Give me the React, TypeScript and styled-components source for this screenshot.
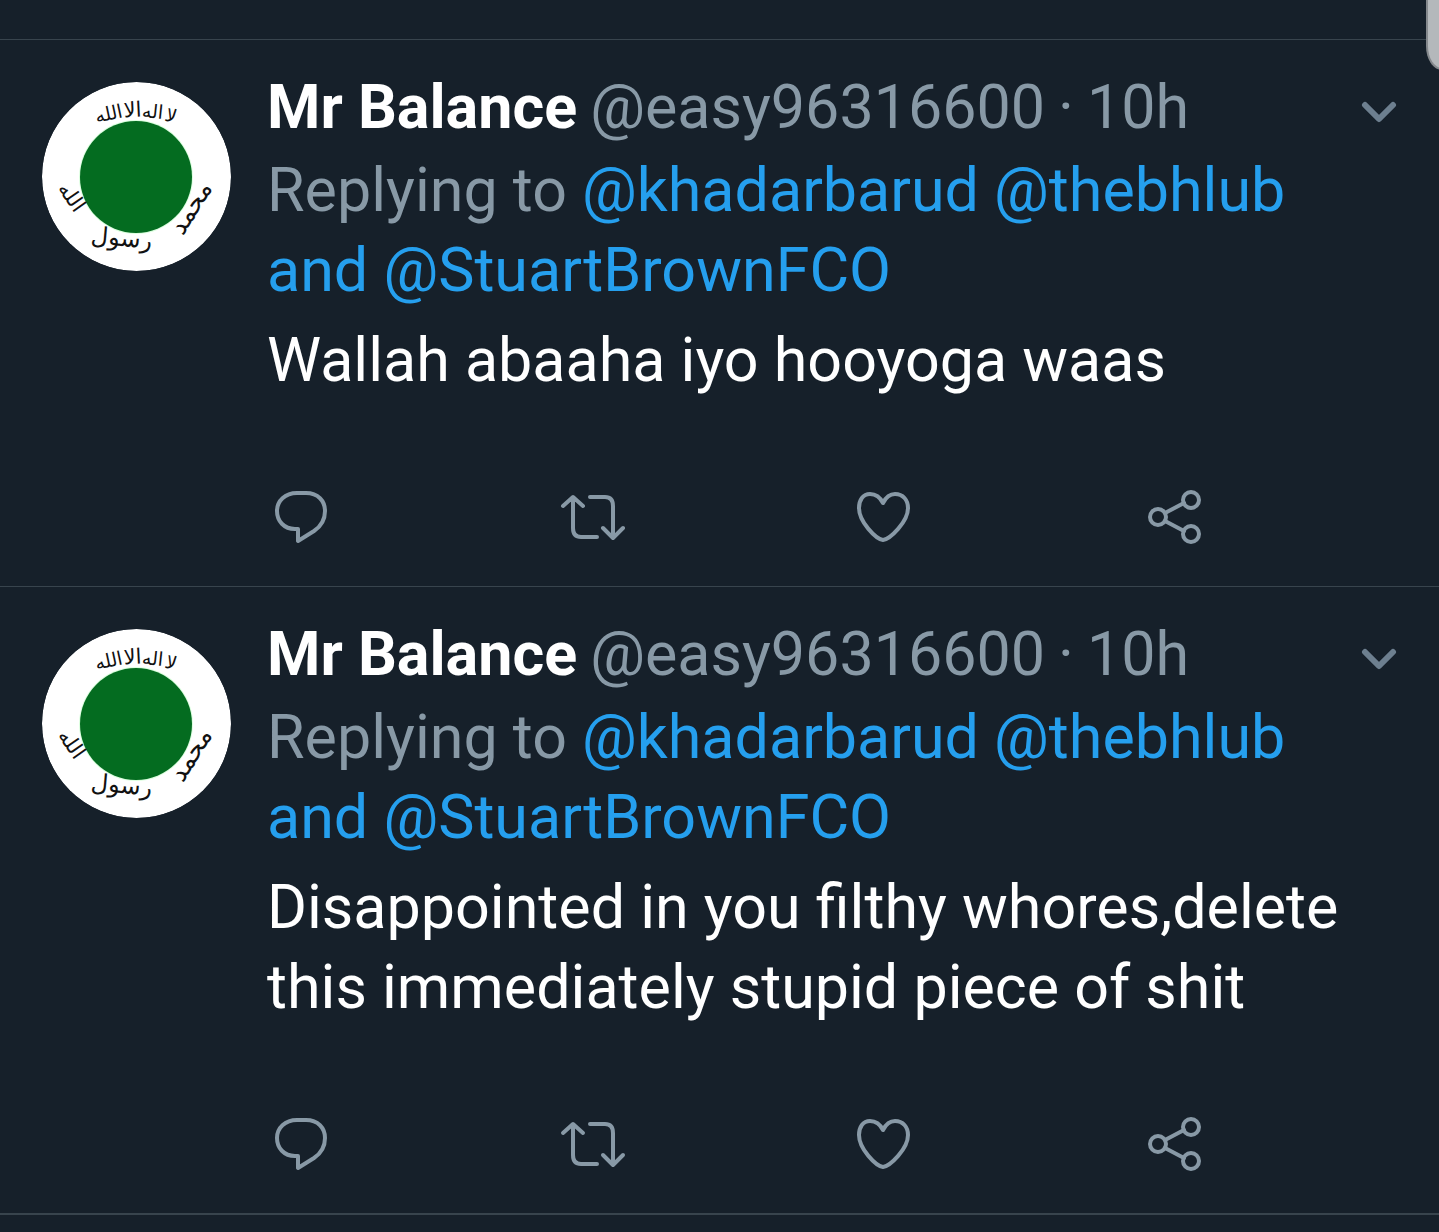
import React from 'react';
import styled, { createGlobalStyle } from 'styled-components';

const colors = {
  background: '#16202a',
  divider: '#38444d',
  muted: '#8899a6',
  chevron: '#6d7f8f',
  link: '#259fee',
  text: '#ffffff',
};

const GlobalStyle = createGlobalStyle`
  * { box-sizing: border-box; }
  body {
    margin: 0;
    background: ${colors.background};
    color: ${colors.text};
    font-family: Roboto, "Noto Sans", sans-serif;
    font-size: 61px;
    line-height: 80px;
  }
`;

const Timeline = styled.main`
  position: relative;
  overflow: hidden;
  padding-top: 39px;
  padding-bottom: 16px;
`;

const ScrollThumb = styled.div`
  position: absolute;
  top: 0;
  right: -27px;
  width: 40px;
  height: 70px;
  background: #b4b8bb;
  border: solid #85898d;
  border-width: 0 2px 2px;
  border-radius: 0 0 16px 16px / 0 0 24px 24px;
`;

const TweetCard = styled.article`
  display: flex;
  gap: 36px;
  padding: 27px 42px 35px;
  border-top: 1px solid ${colors.divider};
`;

const AvatarLink = styled.a`
  flex: none;
  width: 189px;
  height: 189px;
  margin-top: 15px;
  border-radius: 50%;
  overflow: hidden;

  svg { display: block; }
`;

const Body = styled.div`
  flex: 1;
  min-width: 0;
`;

const Header = styled.header`
  display: flex;
  align-items: flex-end;
  justify-content: space-between;
  margin-bottom: 3px;
`;

const Byline = styled.div`
  display: flex;
  gap: 13px;
  color: ${colors.muted};
  white-space: nowrap;
`;

const Name = styled.strong`
  color: ${colors.text};
  font-weight: 700;
`;

const Replying = styled.p`
  margin: 0 0 10px;
  color: ${colors.muted};
`;

const Mention = styled.a`
  color: ${colors.link};
  text-decoration: none;
`;

const Message = styled.p`
  margin: 0;
  padding-right: 24px;
`;

const IconButton = styled.button<{ $color: string; $width: number }>`
  display: flex;
  align-items: center;
  justify-content: center;
  width: ${(p) => p.$width}px;
  height: 68px;
  padding: 0;
  border: 0;
  background: none;
  color: ${(p) => p.$color};
  cursor: pointer;

  svg {
    display: block;
    fill: none;
    stroke: currentColor;
    stroke-width: 4;
    stroke-linecap: round;
    stroke-linejoin: round;
  }
`;

const Actions = styled.div`
  display: flex;
  justify-content: space-between;
  margin-top: 83px;
  padding-right: 189px;
`;

const End = styled.hr`
  height: 2px;
  margin: 0;
  border: 0;
  background: ${colors.divider};
`;

const Script = styled.text`
  font-family: "DejaVu Sans", sans-serif;
  fill: #111;
  text-anchor: middle;
  direction: rtl;
`;

const Avatar = () => (
  <svg width="189" height="189" viewBox="0 0 189 189" role="img" aria-label="Mr Balance">
    <circle cx="94.5" cy="94.5" r="94.5" fill="#fff" />
    <circle cx="94" cy="95" r="57" fill="#dcffdf" />
    <circle cx="94" cy="95" r="56" fill="#046c20" />
    <Script fontSize="19" transform="translate(68 38) rotate(-12)">الله</Script>
    <Script fontSize="21" transform="translate(91 35) rotate(-3)">الا</Script>
    <Script fontSize="19" transform="translate(110 36) rotate(6)">اله</Script>
    <Script fontSize="19" transform="translate(127 40) rotate(18)">لا</Script>
    <Script fontSize="25" transform="translate(156 130) rotate(-58)">محمد</Script>
    <Script fontSize="24" transform="translate(79 164) rotate(5)">رسول</Script>
    <Script fontSize="21" transform="translate(24 119) rotate(55)">الله</Script>
  </svg>
);

const ChevronIcon = () => (
  <svg width="36" height="24" viewBox="0 0 36 24">
    <path d="M4 4L18 18L32 4" strokeWidth="6" />
  </svg>
);

const ReplyIcon = () => (
  <svg width="56" height="56" viewBox="0 0 56 56">
    <path d="M24 4H33C45 4 52 12 52 22C52 32 47 38 41 42L25 52V40H22C11 40 4 32 4 22C4 12 12 4 24 4Z" />
  </svg>
);

const RetweetIcon = () => (
  <svg width="68" height="56" viewBox="0 0 68 56">
    <path d="M5 17L15 8L25 17M15 9V39Q15 48 23 48H39M32 8H47Q55 8 55 17V48M45 39L55 49L65 39" />
  </svg>
);

const LikeIcon = () => (
  <svg width="56" height="56" viewBox="0 0 56 56">
    <path d="M28 14C25 8 21 5 15 5C8 5 4 11 4 19C4 33 21 50 28 51C35 50 53 33 53 19C53 11 48 5 40 5C34 5 31 8 28 14Z" />
  </svg>
);

const ShareIcon = () => (
  <svg width="56" height="56" viewBox="0 0 56 56">
    <circle cx="12" cy="28" r="8" />
    <circle cx="45" cy="11" r="8" />
    <circle cx="45" cy="45" r="8" />
    <path d="M19 24L38 14M19 32L38 42" />
  </svg>
);

const actions = [
  { label: 'Reply', Icon: ReplyIcon },
  { label: 'Retweet', Icon: RetweetIcon },
  { label: 'Like', Icon: LikeIcon },
  { label: 'Share', Icon: ShareIcon },
];

const tweets = [
  'Wallah abaaha iyo hooyoga waas',
  'Disappointed in you filthy whores,delete this immediately stupid piece of shit',
];

const Tweet = ({ message }: { message: string }) => (
  <TweetCard>
    <AvatarLink href="#easy96316600">
      <Avatar />
    </AvatarLink>
    <Body>
      <Header>
        <Byline>
          <Name>Mr Balance</Name>
          <span>@easy96316600</span>
          <span>·</span>
          <time>10h</time>
        </Byline>
        <IconButton type="button" aria-label="More" $color={colors.chevron} $width={36}>
          <ChevronIcon />
        </IconButton>
      </Header>
      <Replying>
        Replying to <Mention href="#khadarbarud">@khadarbarud</Mention>{' '}
        <Mention href="#thebhlub">@thebhlub</Mention>{' '}
        <Mention href="#StuartBrownFCO">and @StuartBrownFCO</Mention>
      </Replying>
      <Message>{message}</Message>
      <Actions>
        {actions.map(({ label, Icon }) => (
          <IconButton key={label} type="button" aria-label={label} $color={colors.muted} $width={68}>
            <Icon />
          </IconButton>
        ))}
      </Actions>
    </Body>
  </TweetCard>
);

export default function App() {
  return (
    <>
      <GlobalStyle />
      <Timeline>
        {tweets.map((message) => (
          <Tweet key={message} message={message} />
        ))}
        <End />
        <ScrollThumb />
      </Timeline>
    </>
  );
}
